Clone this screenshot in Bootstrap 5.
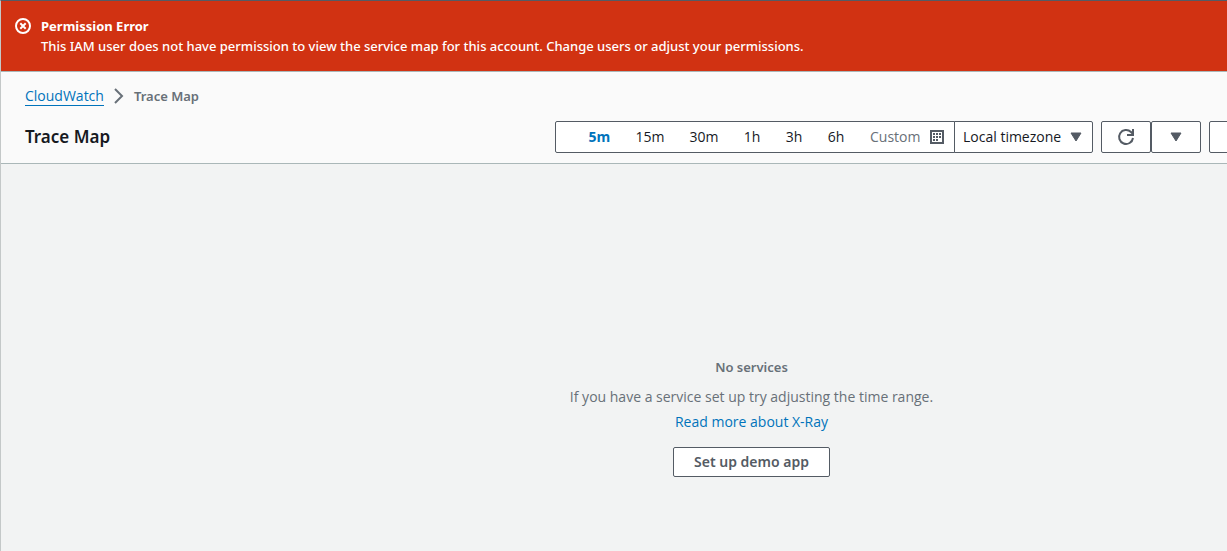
<!DOCTYPE html>
<html lang="en">
<head>
<meta charset="utf-8">
<meta name="viewport" content="width=device-width, initial-scale=1">
<title>Trace Map</title>
<link href="https://cdn.jsdelivr.net/npm/bootstrap@5.3.0/dist/css/bootstrap.min.css" rel="stylesheet">
<style>
  :root { --ink: #16191f; --slate: #545b64; --muted: #687078; --blue: #0073bb; }
  body { font-family: "Noto Sans", "Open Sans", sans-serif; font-size: 14px; line-height: 20px; color: var(--ink); background: #f2f3f3; }
  .os { font-family: "Open Sans", "Noto Sans", sans-serif; font-size: 14px; }
  /* the console is wider than the window, its right end is cut off */
  .console { width: calc(100% + 275px); border-top: 1px solid #545b64; border-left: 1px solid #c4c8c8; }
  .flash { background: #d13212; color: #fff; font-size: 13px; border-bottom: 1px solid #aab7b8; padding: 15px 14px; font-weight: 500; gap: 10px; }
  .flash h2 { font-size: 13px; line-height: 20px; font-weight: 700; }
  .flash svg { margin-top: 2px; }
  .page-head { background: #fafafa; border-bottom: 1px solid #aab7b8; padding: 14px 24px 10px; }
  .crumbs { gap: 7px; }
  .crumbs a { color: var(--blue); text-decoration: none; border-bottom: 1px solid var(--blue); line-height: 18px; }
  .crumbs .here { color: var(--muted); font-size: 13px; font-weight: 600; }
  .title-row { padding-top: 15px; }
  .page-head h1 { font-size: 17px; line-height: 24px; font-weight: 600; }
  .box { height: 32px; background: #fff; border: 1px solid var(--slate); border-radius: 2px; color: var(--ink); line-height: 20px; }
  .range { padding-left: 20px; width: 400px; border-radius: 2px 0 0 2px; }
  .range button { border: 0; background: none; padding: 0; color: inherit; }
  .w-s { width: 42px; } .w-m { width: 47px; } .w-l { width: 54px; }
  .range .on { color: var(--blue); font-weight: 700; }
  .range .custom { color: var(--muted); margin-left: 13px; gap: 10px; }
  .zone { width: 139px; margin-left: -1px; padding: 0 8px; border-radius: 0 2px 2px 0; appearance: none;
    background: #fff url("data:image/svg+xml,%3Csvg xmlns='http://www.w3.org/2000/svg' width='12' height='10'%3E%3Cpath d='M1 1h10L6 9z' fill='%23545b64' stroke='%23545b64' stroke-linejoin='round'/%3E%3C/svg%3E") no-repeat right 10px center; }
  .tool { width: 50px; padding: 0; }
  .more { width: 269px; }
  .empty { padding: 193px 0 74px; color: var(--muted); }
  .empty h2 { font-size: 13px; line-height: 20px; font-weight: 600; margin-bottom: 10px; }
  .empty a { color: var(--blue); text-decoration: none; margin: 5px 0 15px; }
  .demo { height: 30px; padding: 0 20px; color: var(--slate); font-weight: 600; }
</style>
</head>
<body>
<div class="overflow-hidden">
<div class="console">
  <div class="flash d-flex" role="alert">
    <svg class="flex-shrink-0" width="16" height="16" viewBox="0 0 16 16" fill="none" stroke="#fff" stroke-width="2" aria-hidden="true"><circle cx="8" cy="8" r="7"/><path d="M5.3 5.3l5.4 5.4M10.7 5.3l-5.4 5.4"/></svg>
    <div>
      <h2 class="m-0">Permission Error</h2>
      <div>This IAM user does not have permission to view the service map for this account. Change users or adjust your permissions.</div>
    </div>
  </div>
  <header class="page-head">
    <nav class="crumbs d-flex align-items-center" aria-label="Breadcrumb">
      <a class="os" href="#">CloudWatch</a>
      <svg width="16" height="16" viewBox="0 0 16 16" fill="none" stroke="#687078" stroke-width="2" aria-hidden="true"><path d="M4 1l7 7-7 7"/></svg>
      <span class="here" aria-current="page">Trace Map</span>
    </nav>
    <div class="title-row d-flex align-items-center">
      <h1 class="m-0">Trace Map</h1>
      <div class="d-flex ms-auto gap-2">
        <div class="d-flex">
          <div class="box range os d-flex" role="group" aria-label="Time range">
            <button type="button" class="w-m on" aria-pressed="true">5m</button>
            <button type="button" class="w-l">15m</button>
            <button type="button" class="w-l">30m</button>
            <button type="button" class="w-s">1h</button>
            <button type="button" class="w-s">3h</button>
            <button type="button" class="w-s">6h</button>
            <button type="button" class="custom d-flex align-items-center">Custom
              <svg width="14" height="14" viewBox="0 0 14 14" aria-hidden="true"><rect x="1" y="1" width="12" height="12" fill="#fff" stroke="#545b64" stroke-width="2"/><path d="M3 4h2M6 4h2M9 4h2M3 7h2M6 7h2M9 7h2M3 10h2M6 10h2" stroke="#545b64" stroke-width="2"/></svg>
            </button>
          </div>
          <select class="box zone os" aria-label="Timezone"><option>Local timezone</option></select>
        </div>
        <div class="d-flex">
          <button type="button" class="box tool d-flex align-items-center justify-content-center" aria-label="Refresh"><svg width="18" height="18" viewBox="0 0 18 18" fill="none" stroke="#545b64" stroke-width="2" aria-hidden="true"><path d="M16 10a7 7 0 1 1-2-6l2 2M16 1v6h-6"/></svg></button>
          <button type="button" class="box tool d-flex align-items-center justify-content-center" aria-label="Refresh options"><svg width="12" height="10" viewBox="0 0 12 10" aria-hidden="true"><path d="M1 1h10L6 9z" fill="#545b64" stroke="#545b64" stroke-linejoin="round"/></svg></button>
        </div>
        <button type="button" class="box more" aria-label="Actions"></button>
      </div>
    </div>
  </header>
  <main class="empty d-flex flex-column align-items-center">
    <h2>No services</h2>
    <div class="os">If you have a service set up try adjusting the time range.</div>
    <a class="os" href="#">Read more about X-Ray</a>
    <button type="button" class="box demo">Set up demo app</button>
  </main>
</div>
</div>
<script src="https://cdn.jsdelivr.net/npm/bootstrap@5.3.0/dist/js/bootstrap.bundle.min.js"></script>
</body>
</html>
